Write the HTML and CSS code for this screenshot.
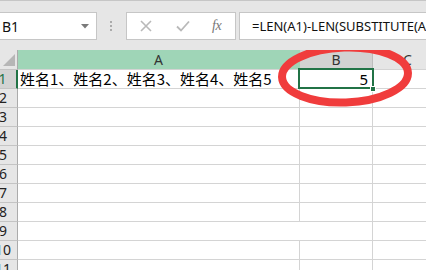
FILE: index.html
```html
<!DOCTYPE html>
<html>
<head>
<meta charset="utf-8">
<link rel="stylesheet" href="styles.css">
</head>
<body>
<div class="app">
  <div class="fbar">
    <div class="namebox"><span class="ref">B1</span><svg class="dd" width="8" height="5" viewBox="0 0 8 5"><path d="M0 0H8L4 4.5Z" fill="#7a7a7a"/></svg></div>
    <div class="grip"><i></i><i></i><i></i></div>
    <div class="btns">
      <svg class="ic" width="12" height="12" viewBox="0 0 12 12"><path d="M1 1L11 11M11 1L1 11" stroke="#b9b9b9" stroke-width="1.6" fill="none"/></svg>
      <svg class="ic" width="14" height="12" viewBox="0 0 14 12"><path d="M1 6.5L5 10.5L13 1.5" stroke="#b9b9b9" stroke-width="1.8" fill="none"/></svg>
      <span class="fx">fx</span>
    </div>
    <div class="formula">=LEN(A1)-LEN(SUBSTITUTE(A1,"、",""))+1</div>
  </div>
  <div class="sheet">
    <div class="row hdr">
      <div class="rh corner"><svg width="12" height="12" viewBox="0 0 12 12"><path d="M12 0V12H0Z" fill="#b6b6b6"/></svg></div>
      <div class="c ca chA">A</div>
      <div class="c cb chB">B</div>
      <div class="c cc chC">C</div>
    </div>
    <div class="row">
      <div class="rh sel">1</div>
      <div class="c ca txt">姓名1、姓名2、姓名3、姓名4、姓名5</div>
      <div class="c cb num active">5<span class="handle"></span></div>
      <div class="c cc"></div>
    </div>
    <div class="row"><div class="rh">2</div><div class="c ca"></div><div class="c cb"></div><div class="c cc"></div></div>
    <div class="row"><div class="rh">3</div><div class="c ca"></div><div class="c cb"></div><div class="c cc"></div></div>
    <div class="row"><div class="rh">4</div><div class="c ca"></div><div class="c cb"></div><div class="c cc"></div></div>
    <div class="row"><div class="rh">5</div><div class="c ca"></div><div class="c cb"></div><div class="c cc"></div></div>
    <div class="row"><div class="rh">6</div><div class="c ca"></div><div class="c cb"></div><div class="c cc"></div></div>
    <div class="row"><div class="rh">7</div><div class="c ca"></div><div class="c cb"></div><div class="c cc"></div></div>
    <div class="row"><div class="rh">8</div><div class="c ca"></div><div class="c cb"></div><div class="c cc"></div></div>
    <div class="row"><div class="rh">9</div><div class="c ca nob"></div><div class="c cb"></div><div class="c cc"></div></div>
    <div class="row"><div class="rh">10</div><div class="c ca"></div><div class="c cb"></div><div class="c cc"></div></div>
    <div class="row"><div class="rh">11</div><div class="c ca"></div><div class="c cb"></div><div class="c cc"></div></div>
    <svg class="ring" width="150" height="76" viewBox="0 0 150 76"><ellipse cx="74" cy="38" rx="63" ry="27.5" transform="rotate(-2 74 38)" fill="none" stroke="#f03c3c" stroke-width="8"/></svg>
  </div>
</div>
</body>
</html>
```
FILE: styles.css
```css
* { box-sizing: border-box; }
html, body { margin: 0; padding: 0; }
body { width: 426px; height: 270px; overflow: hidden; background: #fff; font-family: "Noto Sans", "Noto Sans CJK SC", sans-serif; }
.app { width: 426px; height: 270px; overflow: hidden; }

.fbar {
  height: 50px;
  background: #e6e6e6;
  border-top: 1px solid #c6c6c6;
  padding-top: 11px;
  display: flex;
  align-items: flex-start;
}
.namebox {
  margin-left: -1px;
  width: 98px;
  height: 28px;
  background: #fff;
  border: 1px solid #c6c6c6;
  display: flex;
  align-items: center;
  justify-content: space-between;
  padding: 0 7px 0 2px;
}
.ref { font-size: 14px; color: #111; font-family: "Noto Sans", sans-serif; }
.dd { margin-top: 1px; }
.grip {
  width: 29px;
  height: 28px;
  display: flex;
  flex-direction: column;
  align-items: center;
  justify-content: center;
  gap: 2px;
  padding-right: 1px;
}
.grip i { display: block; width: 2px; height: 2px; background: #ababab; }
.btns {
  width: 110px;
  height: 28px;
  background: #fff;
  border: 1px solid #c6c6c6;
  display: flex;
  align-items: center;
  padding-left: 13px;
}
.btns .ic:nth-child(1) { margin-right: 24px; }
.btns .ic:nth-child(2) { margin-right: 22px; }
.fx { font-family: "Liberation Serif", serif; font-style: italic; font-size: 14px; color: #777; letter-spacing: -0.5px; }
.formula {
  margin-left: 3px;
  flex: 1;
  height: 28px;
  background: #fff;
  border: 1px solid #c6c6c6;
  border-right: none;
  padding-left: 12px;
  font-size: 13px;
  line-height: 26px;
  color: #111;
  white-space: nowrap;
  overflow: hidden;
}

.sheet { position: relative; height: 220px; overflow: hidden; }
.row { display: flex; height: 19px; border-bottom: 1px solid #d4d4d4; }
.row.hdr { height: 20px; border-bottom: 1px solid #d4d4d4; }
.rh {
  margin-left: -10px;
  width: 28px;
  flex: none;
  background: #e6e6e6;
  border-right: 1px solid #ababab;
  text-align: center;
  font-size: 14px;
  line-height: 18px;
  color: #222;
  padding-right: 1px;
}
.row .rh { margin-bottom: -1px; border-bottom: 1px solid #c4c4c4; }
.rh.sel { background: #d2d2d2; color: #217346; border-right: 2px solid #217346; }
.corner { display: flex; align-items: flex-end; justify-content: flex-end; padding: 0 2px 3px 0; }
.c { flex: none; height: 100%; border-right: 1px solid #d4d4d4; }
.ca { width: 282px; }
.ca.nob { border-right-color: #fff; }
.cb { width: 73px; }
.cc { flex: 1; border-right: none; }
.hdr .c { text-align: center; font-size: 14px; line-height: 19px; color: #333; }
.chA { background: #9fd5b7; border-right-color: #9fd5b7; color: #222; }
.chB { background: #d2d2d2; border-right-color: #bdbdbd; color: #217346; }
.chC { background: #e6e6e6; padding-left: 16px; }
.txt { font-family: "Noto Sans CJK SC", sans-serif; font-size: 15px; line-height: 18px; padding-left: 2px; color: #000; white-space: nowrap; }
.num { position: relative; text-align: right; padding-right: 4px; font-size: 15px; line-height: 18px; color: #000; }
.active::after {
  content: "";
  position: absolute;
  left: -2px; top: -2px; right: -2px; bottom: -1px;
  border: 2px solid #217346;
}
.handle {
  position: absolute;
  right: -4px; bottom: -4px;
  width: 6px; height: 6px;
  background: #217346;
  border: 1px solid #fff;
  z-index: 2;
}
.ring { position: absolute; left: 271px; top: -13px; }
```
